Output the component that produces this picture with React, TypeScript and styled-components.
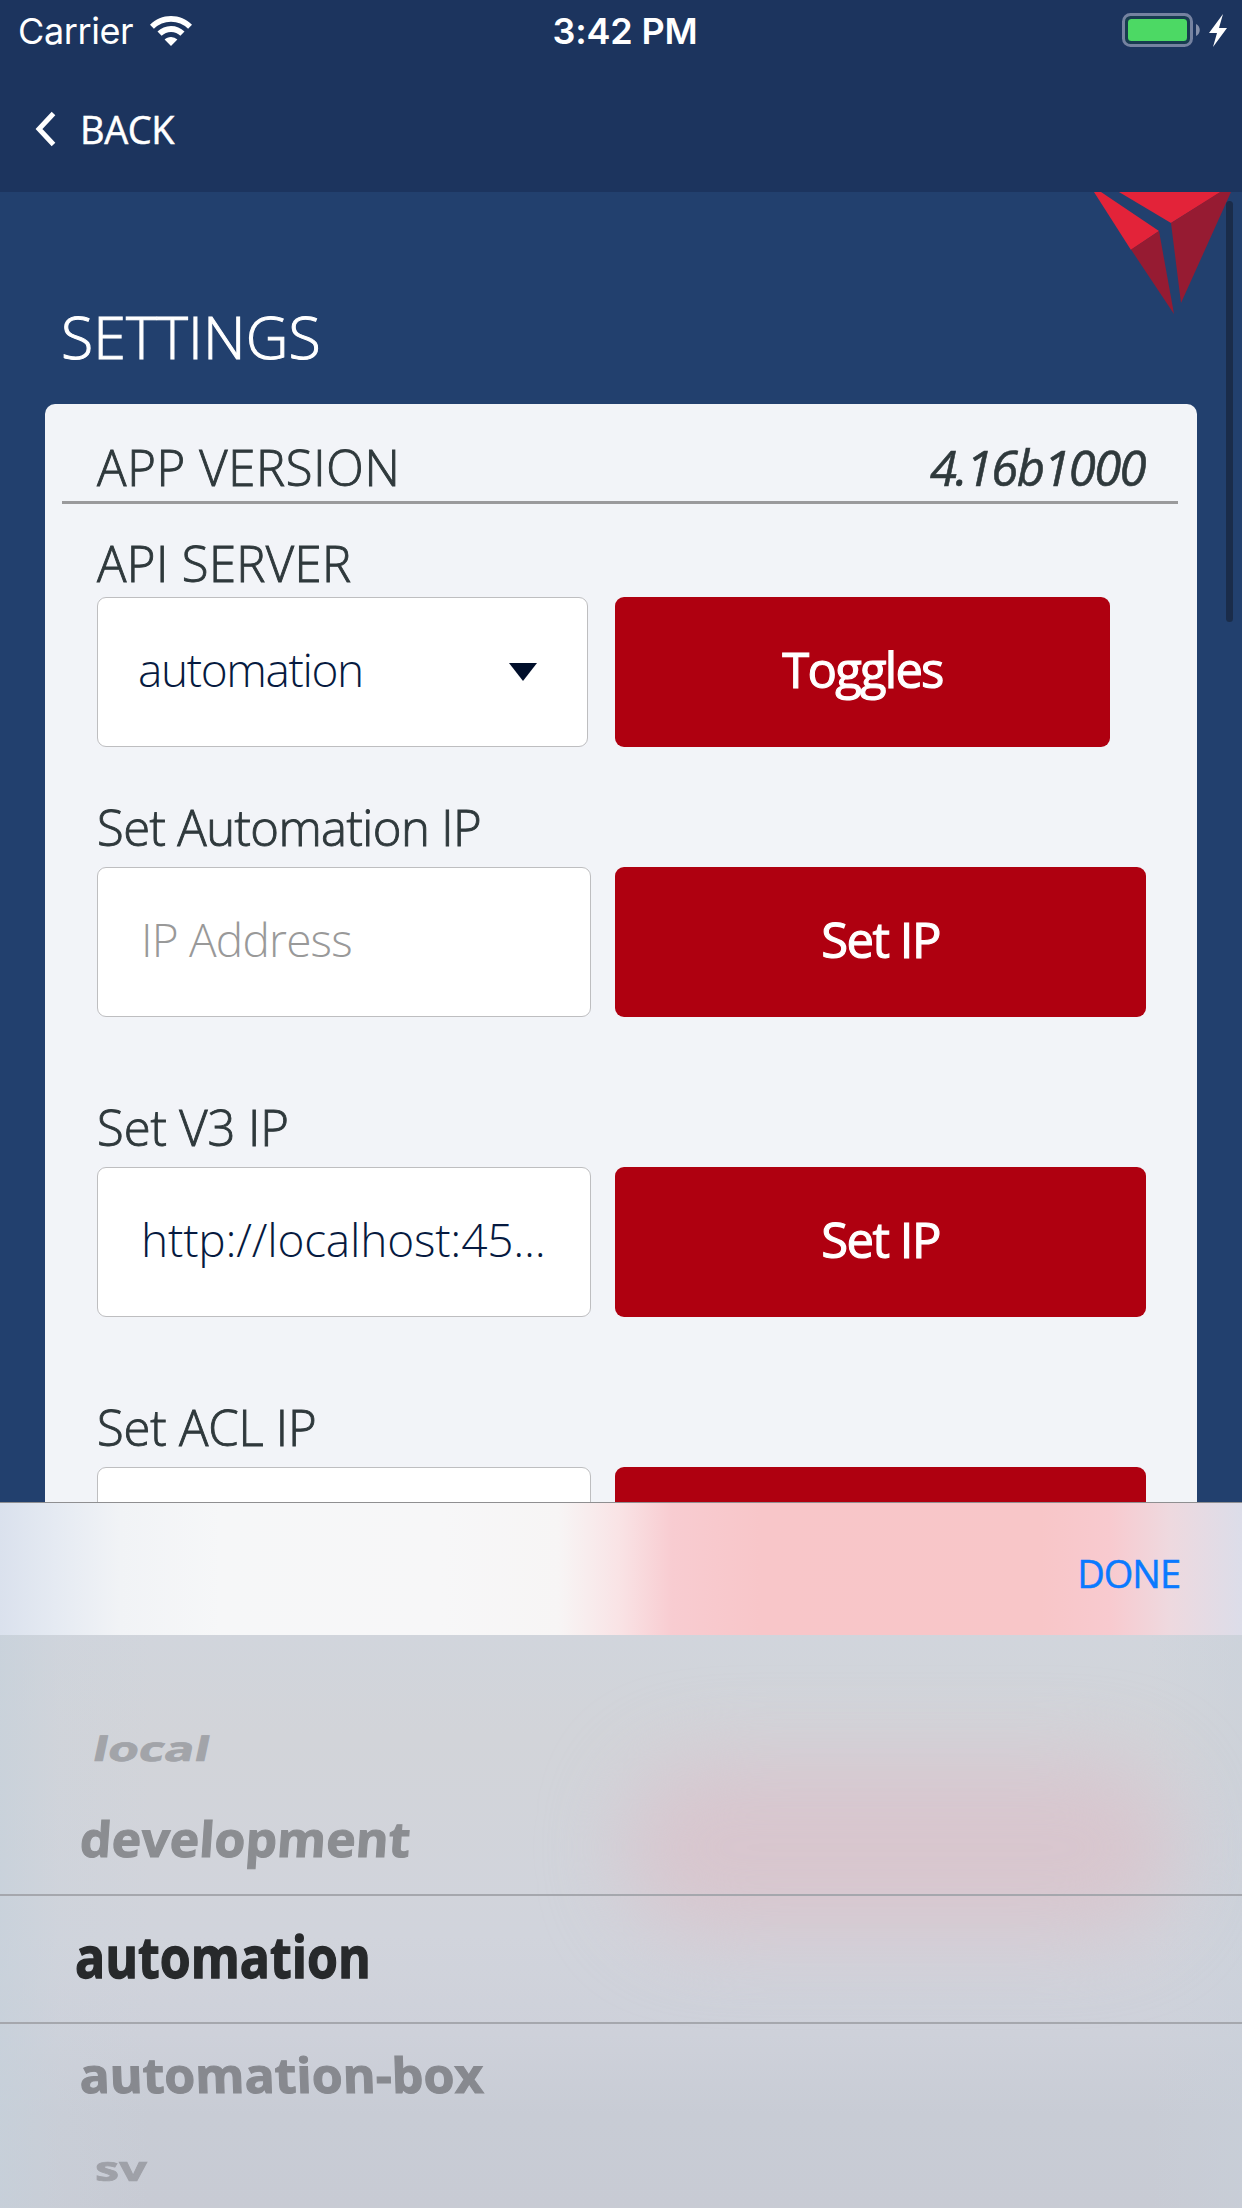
import React from "react";
import styled, { createGlobalStyle } from "styled-components";

const GlobalStyle = createGlobalStyle`
  * { box-sizing: border-box; }
  body { margin: 0; background: #22406e; }
`;

const humanist = `"Open Sans", "Noto Sans", sans-serif`;
const system = `Inter, Roboto, sans-serif`;

const Screen = styled.div`
  width: 1242px;
  height: 2208px;
  overflow: hidden;
  display: flex;
  flex-direction: column;
  background: #22406e;
  font-family: ${humanist};
`;

const Header = styled.header`
  height: 192px;
  flex: none;
  background: #1c345e;
  color: #fff;
`;

const StatusBar = styled.div`
  height: 60px;
  padding: 0 14px 0 18px;
  display: grid;
  grid-template-columns: 1fr auto 1fr;
  align-items: center;
  font: 400 36px/62px ${system};
`;

const Carrier = styled.div`
  display: flex;
  align-items: center;
  gap: 17px;
  letter-spacing: -0.4px;
`;

const Clock = styled.div`
  font-weight: 600;
  letter-spacing: -0.2px;
  padding-left: 4px;
`;

const Power = styled.div`
  display: flex;
  justify-content: flex-end;
`;

const BackButton = styled.button`
  height: 132px;
  padding: 6px 0 0 35px;
  border: 0;
  background: none;
  color: #fff;
  display: flex;
  align-items: center;
  gap: 23px;
  font: 400 38px/60px ${humanist};
  letter-spacing: -0.4px;
  -webkit-text-stroke: 0.5px currentColor;
`;

const Content = styled.main`
  position: relative;
  flex: 1;
  min-height: 0;
  overflow: hidden;
  padding: 108px 45px 0;
`;

const Logo = styled.svg`
  position: absolute;
  top: 0;
  right: 0;
`;

const ScrollThumb = styled.div`
  position: absolute;
  top: 9px;
  right: 9px;
  width: 7px;
  height: 421px;
  border-radius: 4px;
  background: #1a2c4a;
`;

const Title = styled.h1`
  margin: 0 0 32px 16px;
  font-size: 59px;
  line-height: 72px;
  font-weight: 300;
  letter-spacing: 0.1px;
  -webkit-text-stroke: 1px currentColor;
  color: #fff;
`;

const Card = styled.section`
  height: 1300px;
  padding: 32px 19px 0 17px;
  border-radius: 10px;
  background: #f2f4f8;
  color: #2f393c;
`;

const VersionRow = styled.div`
  display: flex;
  justify-content: space-between;
  padding: 1px 33px 4px 35px;
  border-bottom: 3px solid #9a9a9c;
  margin-bottom: 29px;
`;

const Label = styled.div<{ $track?: number }>`
  font-size: 49px;
  line-height: 60px;
  font-weight: 300;
  letter-spacing: ${(p) => p.$track ?? 0}px;
  -webkit-text-stroke: 0.9px currentColor;
`;

const Version = styled.div`
  font-size: 49px;
  line-height: 60px;
  font-style: italic;
  font-weight: 400;
  letter-spacing: -1.6px;
  -webkit-text-stroke: 0.6px currentColor;
`;

const Group = styled.div<{ $gap: number; $after: number }>`
  display: flex;
  flex-direction: column;
  gap: ${(p) => p.$gap}px;
  margin: 0 32px ${(p) => p.$after}px 35px;
`;

const Controls = styled.div<{ $gap?: number }>`
  display: flex;
  gap: ${(p) => p.$gap ?? 24}px;
  height: 150px;
`;

const Field = styled.div<{ $width: number; $inset: number; $track?: number; $muted?: boolean }>`
  flex: none;
  width: ${(p) => p.$width}px;
  padding: 0 50px 0 ${(p) => p.$inset}px;
  border: 1.5px solid #bebec0;
  border-radius: 9px;
  background: #fff;
  display: flex;
  align-items: center;
  justify-content: space-between;
  font-size: 46px;
  line-height: 60px;
  font-weight: 300;
  letter-spacing: ${(p) => p.$track ?? 0}px;
  white-space: nowrap;
  color: ${(p) => (p.$muted ? "#999" : "#061a40")};
`;

const Value = styled.span`
  padding-bottom: 6px;
`;

const Action = styled.button<{ $width: number; $track: number }>`
  flex: none;
  width: ${(p) => p.$width}px;
  border: 0;
  border-radius: 9px;
  background: #af0010;
  color: #fff;
  font: 400 49px/60px ${humanist};
  letter-spacing: ${(p) => p.$track}px;
  -webkit-text-stroke: 1.1px currentColor;
  padding: 0 0 6px;
`;

const Sheet = styled.aside`
  flex: none;
  height: 706px;
`;

const Toolbar = styled.div`
  height: 133px;
  border-top: 1px solid #8f8f91;
  padding: 8px 62px 0 0;
  display: flex;
  align-items: center;
  justify-content: flex-end;
  background: linear-gradient(90deg, #dae1ed 0, #e5eaf2 55px, #f1f3f6 120px, #f6f7f8 220px, #f7f7f8 440px, #f7f5f5 558px, #f9e3e5 620px, #f8ccd1 672px, #f8c6c9 760px, #f8c6c8 1040px, #f8cacf 1110px, #eed9df 1170px, #dcdde9 1242px);
`;

const Done = styled.button`
  border: 0;
  padding: 0;
  background: none;
  color: #0a7aff;
  font: 400 38px/60px ${humanist};
  letter-spacing: -1px;
  -webkit-text-stroke: 0.5px currentColor;
`;

const Picker = styled.div`
  position: relative;
  overflow: hidden;
  height: 573px;
  background:
    linear-gradient(90deg, rgba(198, 209, 219, 0.7) 0, rgba(203, 211, 220, 0.3) 60px, rgba(205, 211, 220, 0) 150px, rgba(205, 211, 220, 0) 1150px, rgba(200, 208, 218, 0.45) 1242px),
    linear-gradient(180deg, #d1d5dc 0, #d2d4d9 100px, #d1d4dc 300px, #ced1da 400px, #c8ccd5 480px, #c8cbd4 573px);

  &::before {
    content: "";
    position: absolute;
    left: 625px;
    top: 125px;
    width: 550px;
    height: 175px;
    border-radius: 85px;
    background: #d8c6ce;
    filter: blur(40px);
  }
`;

const Option = styled.div<{ $height: number; $indent: number; $shift: number; $transform: string; $color: string; $active?: boolean }>`
  position: relative;
  height: ${(p) => p.$height}px;
  padding: ${(p) => p.$shift}px 0 0 ${(p) => p.$indent}px;
  ${(p) => (p.$active ? "border: solid #a5a7ad; border-width: 2px 0;" : "")}
  color: ${(p) => p.$color};
  font-size: 54px;
  line-height: 70px;
  font-weight: 700;
  -webkit-text-stroke: 1.2px currentColor;

  span {
    display: inline-block;
    transform-origin: 0 80%;
    transform: ${(p) => p.$transform};
  }
`;

const Spacer = styled.div`
  height: 70px;
`;

const WifiIcon = () => (
  <svg width="42" height="30" viewBox="0 0 42 30" fill="#fff">
    <path d="M21 0C12.900 0 5.600 3.300 0 8.800l3.900 4A24.500 24.500 0 0 1 21 5.800a24.500 24.500 0 0 1 17.100 7l3.900-4C36.400 3.300 29.100 0 21 0z" />
    <path d="M21 10c-5.200 0-9.900 2.100-13.500 5.600l4.100 4.200A13.700 13.700 0 0 1 21 16c3.700 0 7 1.400 9.400 3.800l4.100-4.200A19.200 19.200 0 0 0 21 10z" />
    <path d="M21 21c-2.500 0-4.800 1-6.400 2.600L21 30l6.400-6.400A9 9 0 0 0 21 21z" />
  </svg>
);

const BatteryIcon = () => (
  <svg width="106" height="36" viewBox="0 0 106 36">
    <rect x="1.500" y="1.500" width="68" height="31" rx="7" fill="#183c50" stroke="#7582a0" strokeWidth="3" />
    <rect x="6" y="6" width="59" height="22" rx="3.500" fill="#4cd964" />
    <path d="M74 11c5 2 5 10 0 12z" fill="#8590aa" />
    <path d="M101 1L87 20h8l-4 14 14-19h-8z" fill="#fff" />
  </svg>
);

export default function App() {
  return (
    <>
      <GlobalStyle />
      <Screen>
        <Header>
          <StatusBar>
            <Carrier>
              Carrier
              <WifiIcon />
            </Carrier>
            <Clock>3:42 PM</Clock>
            <Power>
              <BatteryIcon />
            </Power>
          </StatusBar>
          <BackButton>
            <svg width="22" height="36" viewBox="0 0 22 36" fill="none" stroke="#fff" strokeWidth="5">
              <path d="M18.500 2.500L4 18l14.500 15.500" />
            </svg>
            BACK
          </BackButton>
        </Header>
        <Content>
          <Logo width="160" height="130" viewBox="1082 0 160 130">
            <path d="M1094 0h7l58 39-28 19z" fill="#e32339" />
            <path d="M1131 57.500l28-18.500 15 83z" fill="#961b32" />
            <path d="M1119 0h102l-50 31z" fill="#e32339" />
            <path d="M1220 0h11l-50 111-10-80z" fill="#961b32" />
          </Logo>
          <ScrollThumb />
          <Title>SETTINGS</Title>
          <Card>
            <VersionRow>
              <Label $track={0.7}>APP VERSION</Label>
              <Version>4.16b1000</Version>
            </VersionRow>
            <Group $gap={4} $after={50}>
              <Label $track={0.4}>API SERVER</Label>
              <Controls $gap={27}>
                <Field $width={491} $inset={40} $track={-1.4}>
                  <Value>automation</Value>
                  <svg width="28" height="18" viewBox="0 0 28 18">
                    <path d="M0 0h28L14 18z" fill="#000e2a" />
                  </svg>
                </Field>
                <Action $width={495} $track={-1.8}>Toggles</Action>
              </Controls>
            </Group>
            <Group $gap={10} $after={80}>
              <Label $track={-0.6}>Set Automation IP</Label>
              <Controls>
                <Field $width={494} $inset={43} $track={-0.8} $muted>
                  <Value>IP Address</Value>
                </Field>
                <Action $width={531} $track={-1.5}>Set IP</Action>
              </Controls>
            </Group>
            <Group $gap={10} $after={80}>
              <Label $track={-0.1}>Set V3 IP</Label>
              <Controls>
                <Field $width={494} $inset={43} $track={-0.2}>
                  <Value>http://localhost:45...</Value>
                </Field>
                <Action $width={531} $track={-1.5}>Set IP</Action>
              </Controls>
            </Group>
            <Group $gap={10} $after={0}>
              <Label $track={-0.2}>Set ACL IP</Label>
              <Controls>
                <Field $width={494} $inset={43} />
                <Action $width={531} $track={0} />
              </Controls>
            </Group>
          </Card>
        </Content>
        <Sheet>
          <Toolbar>
            <Done>DONE</Done>
          </Toolbar>
          <Picker>
            <Spacer />
            <Option $height={88} $indent={91} $shift={0} $color="#a2a4a9" $transform="skewX(-12deg) scale(0.92, 0.62)"><span>local</span></Option>
            <Option $height={101} $indent={79} $shift={8} $color="#8b8d91" $transform="skewX(-4deg) scale(0.926, 0.9)"><span>development</span></Option>
            <Option $height={130} $indent={75} $shift={26} $color="#27292b" $transform="scale(0.926, 1.07)" $active><span>automation</span></Option>
            <Option $height={100} $indent={80} $shift={13} $color="#87898f" $transform="skewX(2deg) scale(0.927, 0.9)"><span>automation-box</span></Option>
            <Option $height={84} $indent={95} $shift={1} $color="#9fa1a8" $transform="scale(0.9, 0.62)"><span>sv</span></Option>
          </Picker>
        </Sheet>
      </Screen>
    </>
  );
}
